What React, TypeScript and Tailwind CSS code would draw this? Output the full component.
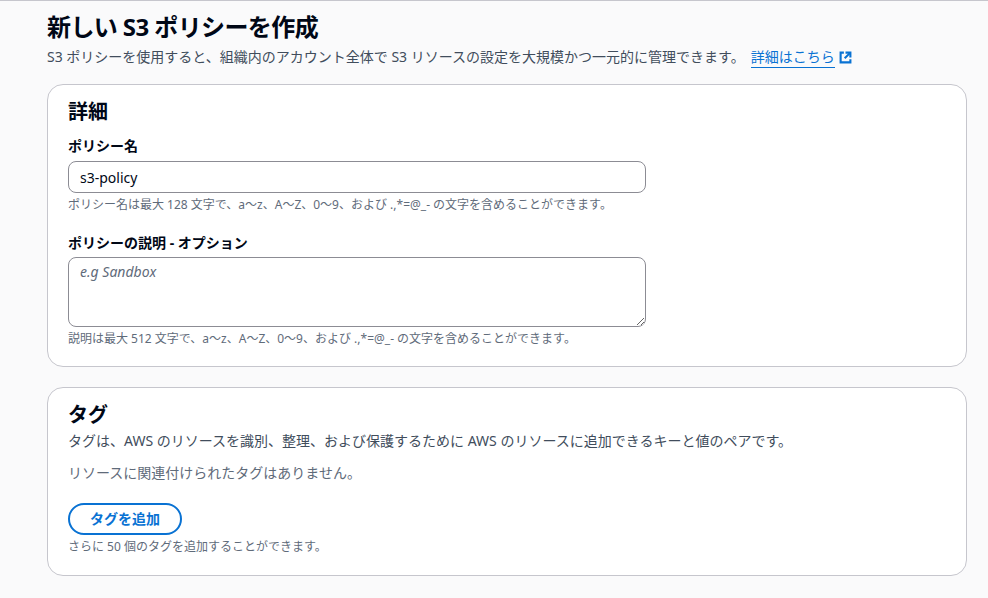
import React from 'react';

const font = { fontFamily: '"Noto Sans", "Noto Sans CJK JP", sans-serif' };

const ExternalIcon = () => (
  <svg width="13" height="13" viewBox="0 0 16 16" fill="none" stroke="#0972d3" strokeWidth="2.6" className="inline-block ml-1 -mt-0.5">
    <path d="M8 2h6v6" strokeLinejoin="miter" />
    <path d="M14 2 7 9" />
    <path d="M6 2H2v12h12v-4" />
  </svg>
);

export default function App() {
  return (
    <div
      className="min-h-[598px] w-full bg-[#fafafb] border-t border-[#c6c6cd] text-[#000716]"
      style={font}
    >
      <div className="pl-[47px] pr-[21px] pt-[9px]">
        {/* Header */}
        <h1 className="text-[24px] font-bold leading-[34px] tracking-tight">新しい S3 ポリシーを作成</h1>
        <p className="text-[14px] leading-[24px] text-[#414d5c] mt-[1px]">
          S3 ポリシーを使用すると、組織内のアカウント全体で S3 リソースの設定を大規模かつ一元的に管理できます。
          <a href="#" className="ml-[6px] text-[#0972d3] border-b border-[#0972d3] pb-[1px]">
            詳細はこちら
          </a>
          <ExternalIcon />
        </p>

        {/* Details */}
        <div className="mt-[15px] bg-white border border-[#c6c6cd] rounded-[16px] px-[20px] pt-[12px] pb-[17px]">
          <h2 className="text-[20px] font-bold leading-[30px]">詳細</h2>
          <div className="mt-[8px]">
            <label className="block text-[14px] font-bold leading-[22px]">ポリシー名</label>
            <input
              defaultValue="s3-policy"
              className="mt-[4px] block w-[578px] h-[32px] rounded-[8px] border border-[#8c8c94] px-[11px] text-[14px] outline-none"
              style={font}
            />
            <p className="mt-[2px] text-[12px] leading-[20px] text-[#5f6b7a]">
              ポリシー名は最大 128 文字で、a〜z、A〜Z、0〜9、および .,*=@_- の文字を含めることができます。
            </p>
          </div>
          <div className="mt-[17px]">
            <label className="block text-[14px] font-bold leading-[22px]">ポリシーの説明 - オプション</label>
            <textarea
              placeholder="e.g Sandbox"
              className="mt-[3px] block w-[578px] h-[70px] rounded-[8px] border border-[#8c8c94] px-[11px] py-[3px] text-[14px] italic outline-none placeholder:text-[#5f6b7a]"
              style={font}
            />
            <p className="mt-[2px] text-[12px] leading-[20px] text-[#5f6b7a]">
              説明は最大 512 文字で、a〜z、A〜Z、0〜9、および .,*=@_- の文字を含めることができます。
            </p>
          </div>
        </div>

        {/* Tags */}
        <div className="mt-[20px] bg-white border border-[#c6c6cd] rounded-[16px] px-[20px] pt-[12px] pb-[18px]">
          <h2 className="text-[20px] font-bold leading-[30px]">タグ</h2>
          <p className="text-[14px] leading-[22px] text-[#414d5c]">
            タグは、AWS のリソースを識別、整理、および保護するために AWS のリソースに追加できるキーと値のペアです。
          </p>
          <p className="mt-[10px] text-[14px] leading-[22px] text-[#5f6b7a]">リソースに関連付けられたタグはありません。</p>
          <button
            className="mt-[19px] h-[32px] px-[20px] rounded-full border-2 border-[#0972d3] text-[#0972d3] text-[14px] font-bold leading-[20px]"
            style={font}
          >
            タグを追加
          </button>
          <p className="mt-[2px] text-[12px] leading-[20px] text-[#5f6b7a]">さらに 50 個のタグを追加することができます。</p>
        </div>
      </div>
    </div>
  );
}
